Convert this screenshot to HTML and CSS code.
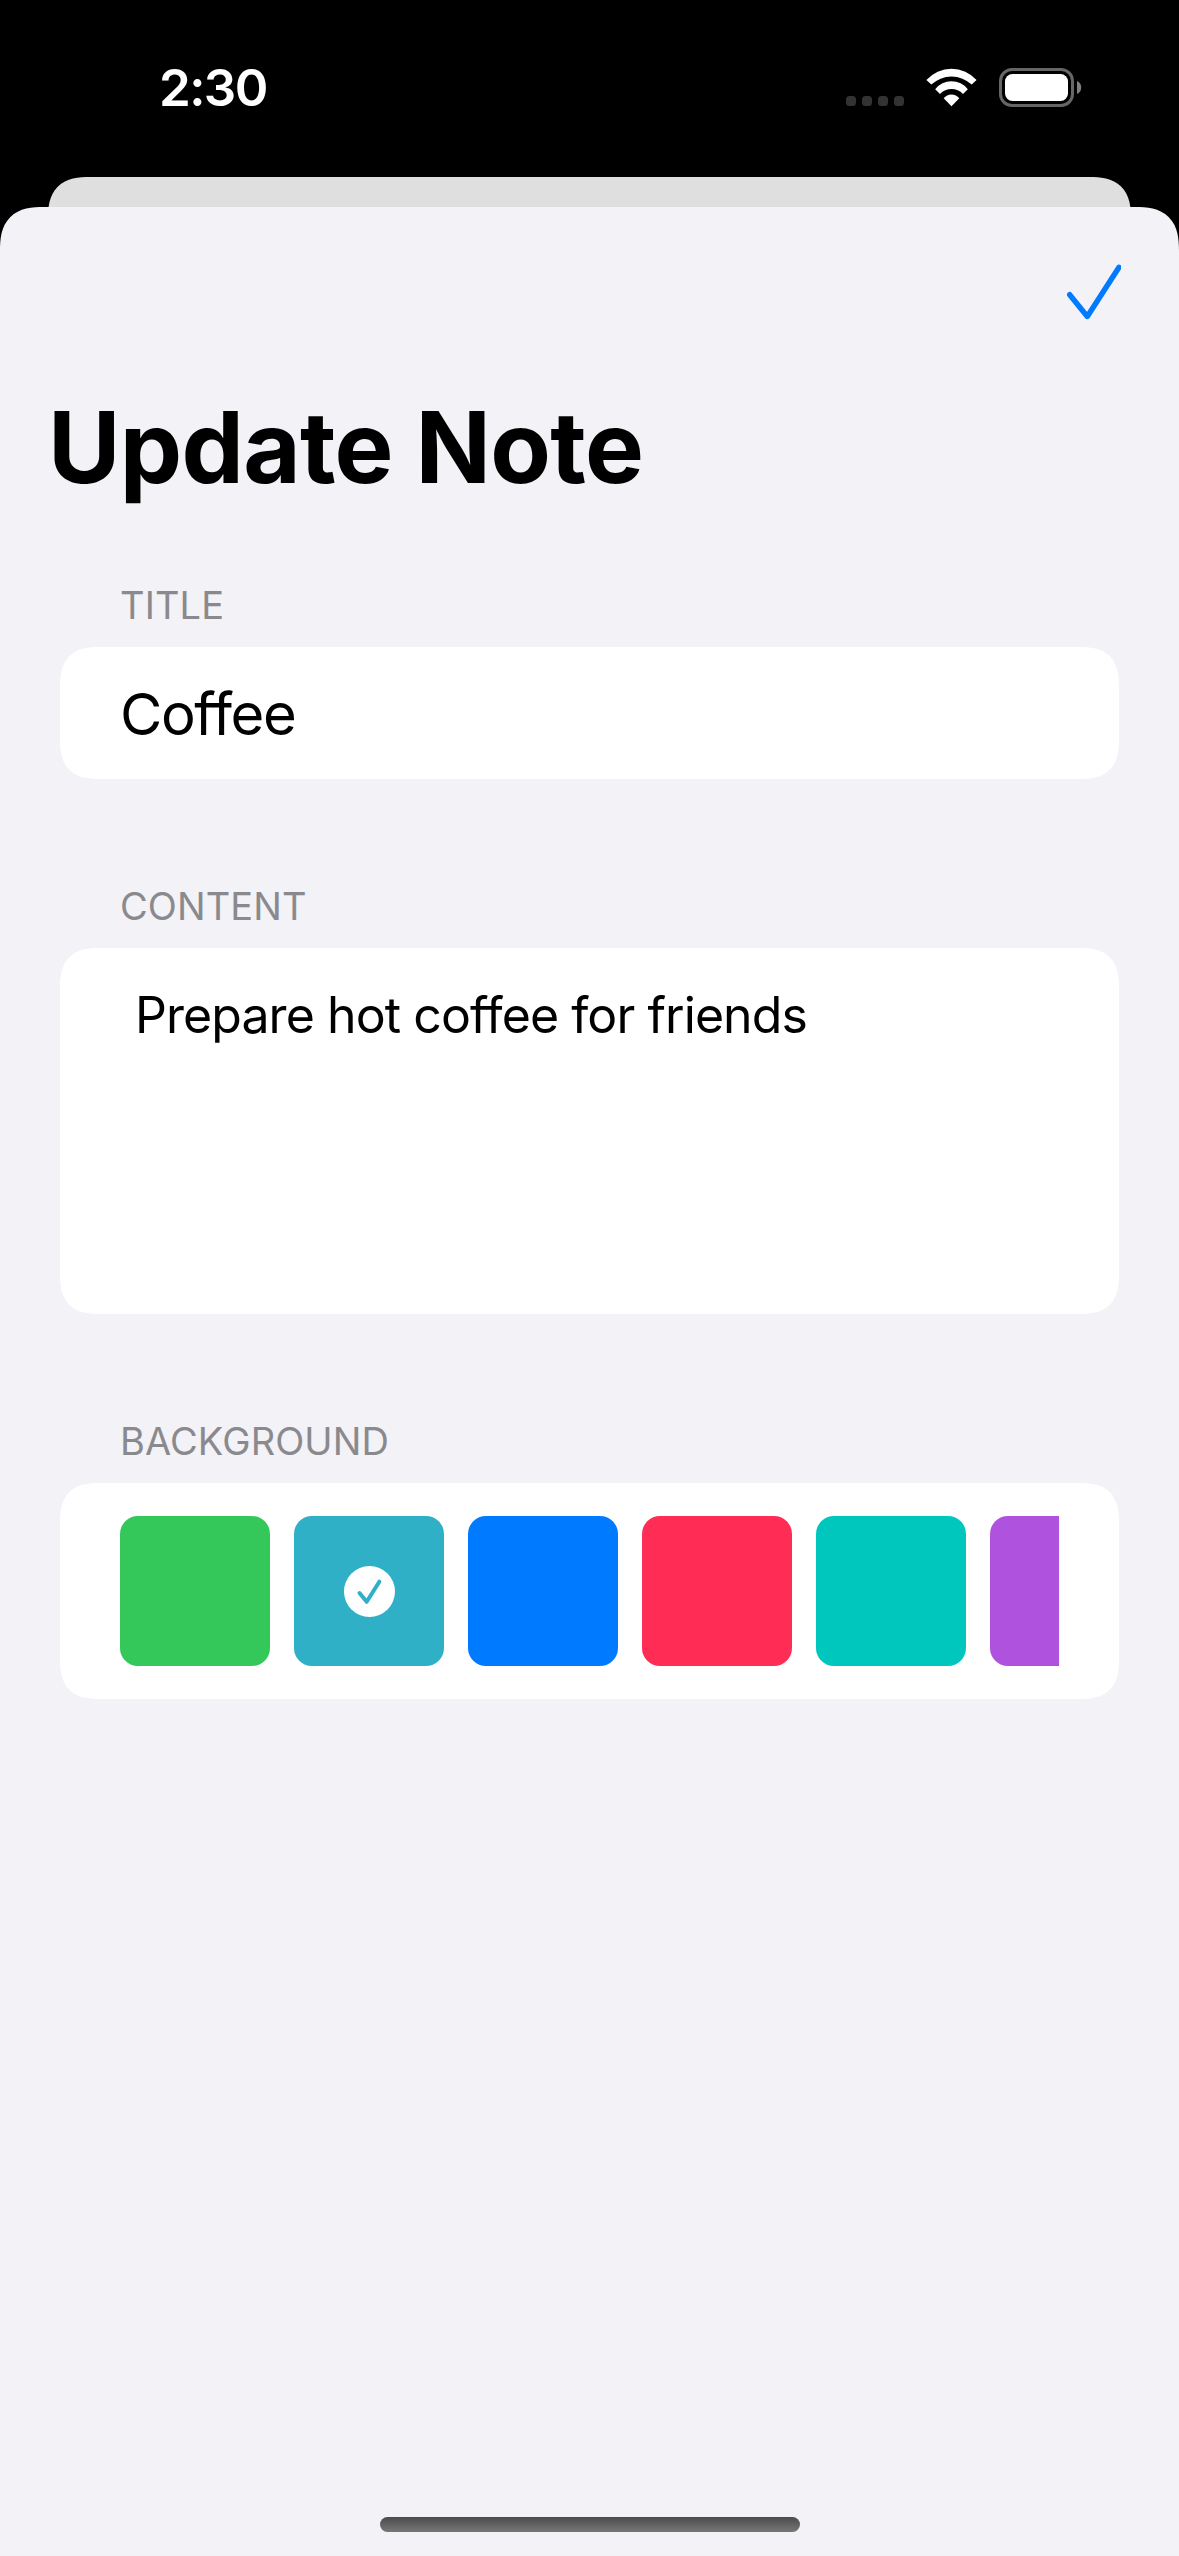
FILE: index.html
```
<!DOCTYPE html>
<html lang="en">
<head>
<meta charset="utf-8">
<title>Update Note</title>
<link rel="stylesheet" href="styles.css">
</head>
<body>
<div class="screen">
  <header class="status-bar">
    <span class="time">2:30</span>
    <svg class="status-icons" width="240" height="44" viewBox="844 66 240 44">
      <g fill="#333">
        <rect x="846" y="96" width="10" height="10" rx="3.5"/>
        <rect x="862" y="96" width="10" height="10" rx="3.5"/>
        <rect x="878" y="96" width="10" height="10" rx="3.5"/>
        <rect x="894" y="96" width="10" height="10" rx="3.5"/>
      </g>
      <g fill="#fff">
        <path d="M926.4 80A33.5 33.5 0 0 1 976.6 80L971.7 84.6A29.5 29.5 0 0 0 931.3 84.6Z"/>
        <path d="M935.2 89.2A20.6 20.6 0 0 1 967.8 89.2L963 93.9A16 16 0 0 0 940 93.9Z"/>
        <path d="M943.7 98.2A10 10 0 0 1 959.3 98.2L951.5 106.2Z"/>
      </g>
      <rect x="1000.5" y="69.5" width="72" height="36" rx="11.5" fill="none" stroke="#666" stroke-width="3"/>
      <rect x="1005" y="74" width="63" height="27" rx="7.5" fill="#fff"/>
      <path d="M1077 81C1079.600 82 1081.200 84.500 1081.200 87.500S1079.600 93 1077 94Z" fill="#808080"/>
    </svg>
  </header>
  <div class="back-sheet"></div>
  <main class="sheet">
    <nav class="toolbar">
      <svg class="done" width="56" height="56" viewBox="0 0 56 56">
        <path d="M4.700 30.700L22.300 52.500L54 3.300"/>
      </svg>
    </nav>
    <h1 class="heading">Update Note</h1>
    <section class="group">
      <h2 class="label">TITLE</h2>
      <div class="card card-title"><span class="note-title">Coffee</span></div>
    </section>
    <section class="group">
      <h2 class="label">CONTENT</h2>
      <div class="card card-content"><p class="note-content">Prepare hot coffee for friends</p></div>
    </section>
    <section class="group">
      <h2 class="label">BACKGROUND</h2>
      <div class="card card-colors">
        <div class="swatches">
          <div class="swatch green"></div>
          <div class="swatch teal">
            <svg width="52" height="52" viewBox="0 0 52 52">
              <circle cx="26.500" cy="26.500" r="25.500" fill="#fff"/>
              <path d="M16.500 28L23.700 36.800L36.300 16.700"/>
            </svg>
          </div>
          <div class="swatch blue"></div>
          <div class="swatch pink"></div>
          <div class="swatch mint"></div>
          <div class="swatch purple"></div>
        </div>
      </div>
    </section>
    <div class="home-indicator"></div>
  </main>
</div>
</body>
</html>
```
FILE: styles.css
```
* {
  box-sizing: border-box;
  margin: 0;
  padding: 0;
}

body {
  background: #000;
  font-family: Inter, "Liberation Sans", sans-serif;
}

.screen {
  display: flex;
  flex-direction: column;
  width: 1179px;
  height: 2556px;
  overflow: hidden;
  background: #000;
}

.status-bar {
  display: flex;
  flex: none;
  justify-content: space-between;
  align-items: flex-start;
  height: 177px;
  padding: 66px 95px 0 159px;
}

.time {
  color: #fff;
  font-size: 51px;
  font-weight: 600;
  line-height: 44px;
  letter-spacing: -1.6px;
}

.status-icons {
  display: block;
}

.back-sheet {
  flex: none;
  height: 60px;
  margin: 0 48px -30px;
  border-radius: 42px 42px 0 0;
  corner-shape: superellipse(1.4);
  background: #dfdfdf;
}

.sheet {
  display: flex;
  flex: 1;
  flex-direction: column;
  padding: 0 60px 24px;
  border-radius: 44px 44px 0 0;
  corner-shape: superellipse(1.4);
  background: #f2f2f7;
  z-index: 1;
}

.toolbar {
  display: flex;
  justify-content: flex-end;
  height: 168px;
  padding-top: 57px;
  margin-right: -2px;
}

.done path {
  fill: none;
  stroke: #007aff;
  stroke-width: 5.4;
  stroke-linecap: round;
  stroke-linejoin: round;
}

.heading {
  height: 144px;
  margin-left: -12px;
  font-size: 99px;
  font-weight: 700;
  line-height: 144px;
  letter-spacing: -0.7px;
  white-space: nowrap;
}

.group {
  padding-top: 61px;
}

.group + .group {
  padding-top: 102px;
}

.label {
  height: 67px;
  padding-left: 60px;
  color: #8a8a8e;
  font-size: 38px;
  font-weight: 400;
  line-height: 50px;
  letter-spacing: 0.1px;
}

.card {
  border-radius: 40px;
  corner-shape: superellipse(1.4);
  background: #fff;
}

.card-title {
  display: flex;
  align-items: center;
  height: 132px;
  padding: 2px 60px 0;
}

.note-title {
  font-size: 58px;
  letter-spacing: -1.4px;
}

.card-content {
  height: 366px;
  padding: 34px 75px;
}

.note-content {
  font-size: 50px;
  line-height: 66px;
  letter-spacing: -0.93px;
  white-space: nowrap;
}

.card-colors {
  padding: 33px 60px;
}

.swatches {
  display: flex;
  gap: 24px;
  overflow: hidden;
}

.swatch {
  display: flex;
  flex: none;
  justify-content: center;
  align-items: center;
  width: 150px;
  height: 150px;
  border-radius: 18px;
}

.swatch path {
  fill: none;
  stroke: #30b0c7;
  stroke-width: 4;
  stroke-linecap: round;
  stroke-linejoin: round;
}

.green { background: #34c759; }
.teal { background: #30b0c7; }
.blue { background: #007aff; }
.pink { background: #ff2d55; }
.mint { background: #00c7be; }
.purple { background: #af52de; }

.home-indicator {
  width: 420px;
  height: 15px;
  margin: auto auto 0;
  border-radius: 8px;
  background: linear-gradient(#4b4b4b, #777);
}
```
